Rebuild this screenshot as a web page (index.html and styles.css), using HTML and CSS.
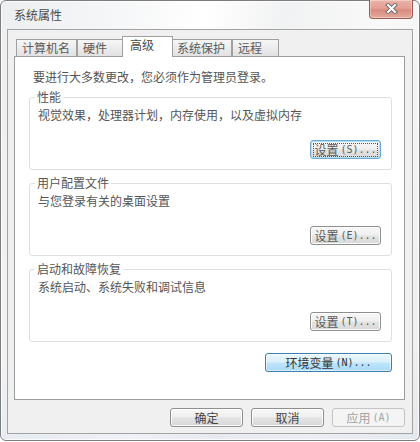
FILE: index.html
```html
<!DOCTYPE html>
<html lang="zh-CN">
<head>
<meta charset="utf-8">
<title>系统属性</title>
<link rel="stylesheet" href="styles.css">
</head>
<body>
<div class="window">
  <div class="titlebar">
    <span class="title">系统属性</span>
    <button class="close" aria-label="关闭">
      <svg width="13" height="11" viewBox="0 0 13 11">
        <path d="M3 2 L10 9 M10 2 L3 9" stroke="#6e6e6e" stroke-width="4" stroke-linecap="square" fill="none"/>
        <path d="M3 2 L10 9 M10 2 L3 9" stroke="#ffffff" stroke-width="2" stroke-linecap="square" fill="none"/>
      </svg>
    </button>
  </div>
  <div class="client">
    <div class="tabs">
      <div class="tab">计算机名</div>
      <div class="tab">硬件</div>
      <div class="tab active">高级</div>
      <div class="tab">系统保护</div>
      <div class="tab">远程</div>
    </div>
    <div class="panel">
      <p class="note">要进行大多数更改，您必须作为管理员登录。</p>
      <fieldset class="group">
        <legend>性能</legend>
        <p class="desc">视觉效果，处理器计划，内存使用，以及虚拟内存</p>
        <div class="row">
          <button class="btn small focus"><span class="focusrect">设置<span class="lat">(S)...</span></span></button>
        </div>
      </fieldset>
      <fieldset class="group">
        <legend>用户配置文件</legend>
        <p class="desc">与您登录有关的桌面设置</p>
        <div class="row">
          <button class="btn small">设置<span class="lat">(E)...</span></button>
        </div>
      </fieldset>
      <fieldset class="group">
        <legend>启动和故障恢复</legend>
        <p class="desc">系统启动、系统失败和调试信息</p>
        <div class="row">
          <button class="btn small">设置<span class="lat">(T)...</span></button>
        </div>
      </fieldset>
      <div class="row env-row">
        <button class="btn env">环境变量<span class="lat">(N)...</span></button>
      </div>
    </div>
    <div class="actions">
      <button class="btn action">确定</button>
      <button class="btn action">取消</button>
      <button class="btn action disabled" disabled>应用<span class="lat">(A)</span></button>
    </div>
  </div>
</div>
</body>
</html>
```
FILE: styles.css
```css
* { box-sizing: border-box; }
html, body { margin: 0; padding: 0; }
body {
  width: 420px;
  height: 442px;
  background: #ffffff;
  font-family: "Noto Sans CJK SC", sans-serif;
  font-size: 12px;
  line-height: 14px;
  color: #555555;
}
.window {
  width: 420px;
  height: 441px;
  border: 1px solid #7d7d7d;
  border-radius: 6px;
  padding: 0 6px 6px;
  display: flex;
  flex-direction: column;
  background:
    linear-gradient(180deg, rgba(255,255,255,0) 80%, rgba(220,228,236,0.5) 100%),
    linear-gradient(100deg, #eceef0 0%, #f6f7f8 25%, #ffffff 42%, #f1f2f3 58%, #f9f9f9 78%, #eceef0 100%);
  box-shadow: inset 0 0 0 1px rgba(255,255,255,0.8);
}
.titlebar {
  height: 28px;
  flex: none;
  display: flex;
  justify-content: space-between;
  align-items: flex-start;
  padding-left: 7px;
}
.title {
  margin-top: 7px;
  color: #4a4a4a;
}
.close {
  width: 44px;
  height: 19px;
  margin-top: -1px;
  padding: 0 0 1px;
  border: 1px solid #9c5a50;
  border-top: none;
  border-radius: 0 0 4px 4px;
  background: linear-gradient(180deg, #ebb3a7 0%, #e4a093 45%, #d98a7d 55%, #e3ab9f 100%);
  box-shadow: inset 0 0 0 1px rgba(255,255,255,0.35);
  display: flex;
  align-items: center;
  justify-content: center;
}
.client {
  flex: 1;
  border: 1px solid #a3a3a3;
  background: #f0f0f0;
  padding: 6px 7px 6px 6px;
  display: flex;
  flex-direction: column;
}
.tabs {
  display: flex;
  align-items: flex-end;
  height: 20px;
  margin-left: 2px;
  flex: none;
}
.tab {
  height: 17px;
  min-width: 47px;
  padding: 1px 6px 0 5px;
  border: 1px solid #a0a0a0;
  border-bottom: none;
  background: linear-gradient(180deg, #f6f6f6 0%, #ececec 50%, #e2e2e2 100%);
  color: #5a5a5a;
  white-space: nowrap;
}
.tab.active {
  height: 21px;
  margin: 0 -2px -1px;
  padding: 1px 8px 0 7px;
  min-width: 51px;
  background: #ffffff;
  position: relative;
  z-index: 1;
  color: #4a4a4a;
}
.panel {
  height: 344px;
  flex: none;
  border: 1px solid #9c9c9c;
  background: #ffffff;
  padding: 13px 12px 0 14px;
}
.note {
  margin: 0 0 0 4px;
}
.group {
  margin: 6px 0 0;
  padding: 0 10px 10px 8px;
  border: 1px solid #dde0e3;
  border-radius: 3px;
  min-width: 0;
}
.group legend {
  padding: 0 2px;
  margin-left: -3px;
  line-height: 14px;
}
.desc {
  margin: 4px 0 0;
}
.row {
  display: flex;
  justify-content: flex-end;
  margin-top: 18px;
}
.env-row {
  margin-top: 11px;
}
.btn {
  height: 19px;
  padding: 0;
  font: inherit;
  line-height: 14px;
  color: #444444;
  border: 1px solid #8e8f8f;
  border-radius: 3px;
  background: linear-gradient(180deg, #f7f7f7 0%, #efefef 48%, #e3e3e3 52%, #d9d9d9 100%);
  box-shadow: inset 0 0 0 1px rgba(255,255,255,0.85);
  display: flex;
  align-items: center;
  justify-content: center;
  white-space: nowrap;
}
.lat {
  font-family: "DejaVu Sans Mono", "Liberation Mono", monospace;
  font-size: 10px;
  margin-left: 2px;
}
.small { width: 71px; color: #5a5a5a; }
.focus {
  border-color: #6aaad4;
  box-shadow: inset 0 0 0 1px #b4e0f6;
  padding: 2px 2px 1px 2px;
}
.focusrect {
  flex: 1;
  align-self: stretch;
  border: 1px dotted #555;
  display: flex;
  align-items: center;
  justify-content: center;
}
.env {
  width: 127px;
  border-color: #3c7fb1;
  background: linear-gradient(180deg, #eaf6fd 0%, #d9f0fc 48%, #bee6fd 52%, #a9daf5 100%);
  box-shadow: inset 0 0 0 1px rgba(255,255,255,0.55);
  color: #333333;
}
.actions {
  display: flex;
  justify-content: flex-end;
  gap: 8px;
  margin-top: 8px;
}
.action { width: 73px; }
.disabled {
  border-color: #c2c4c6;
  background: #f4f4f4;
  box-shadow: none;
  color: #a3a3a3;
}
```
